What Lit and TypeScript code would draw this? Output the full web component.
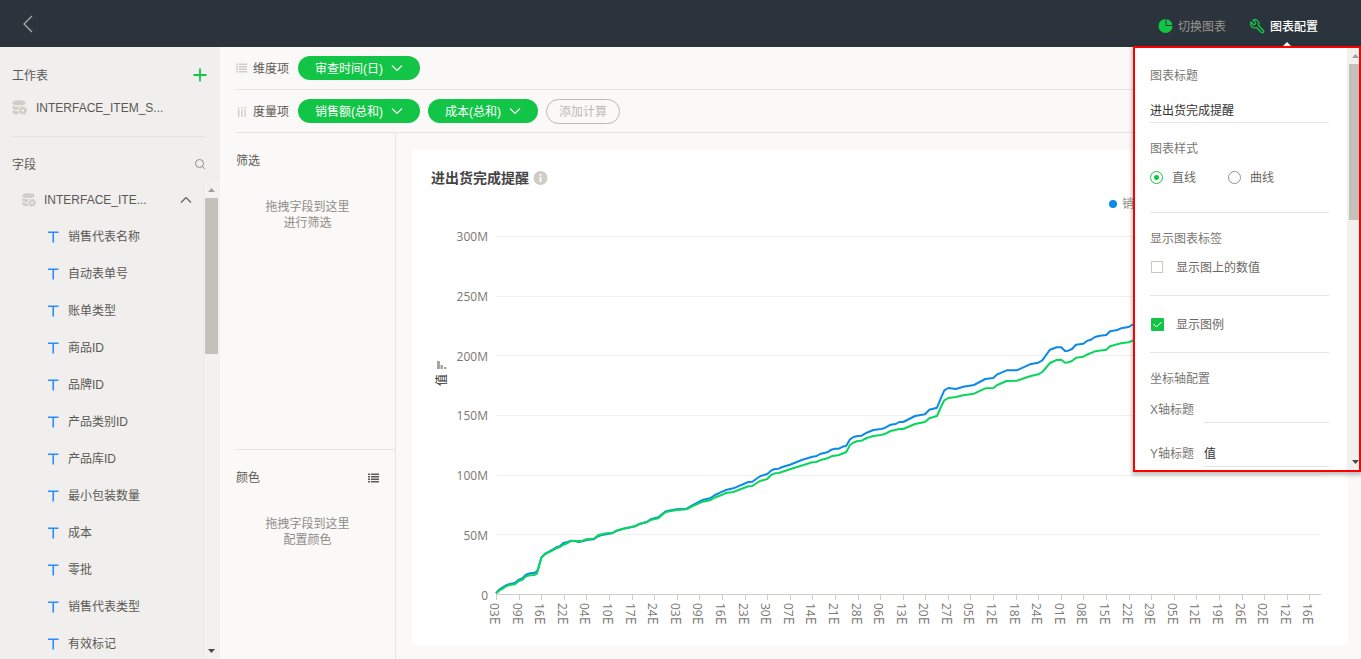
import { LitElement, html, css, svg } from "lit";
import { customElement, property } from "lit/decorators.js";

const FIELDS = ["销售代表名称", "自动表单号", "账单类型", "商品ID", "品牌ID", "产品类别ID", "产品库ID", "最小包装数量", "成本", "零批", "销售代表类型", "有效标记"];

const DAYS = ["03", "09", "16", "22", "04", "10", "17", "24", "03", "09", "16", "23", "30", "07", "14", "21", "28", "06", "13", "20", "27", "05", "12", "18", "24", "01", "08", "15", "22", "29", "05", "12", "19", "26", "02", "12", "16"];

const Y_TICKS = ["300M", "250M", "200M", "150M", "100M", "50M", "0"];

const SALES =
  "496,593.3 500,589 507.3,584.7 511,583.7 515,583 518.3,580 522.3,578.3 526,574.7 530,573.3 534,573 537,571.3 538.3,568 541.3,557.7 544.7,554 549,551.7 552.7,549.7 556.3,547.3 560,546.3 563.3,543 567.7,542 571.3,540.7 575,541 578.7,542 582.7,541.3 586.3,540 594,539.3 598,536.3 601.7,535 609.3,533.7 613.3,532.7 616.7,530.7 623.3,528.7 635,526.3 639.3,524 646.7,522 650.7,519.3 658.3,517.3 665.7,511.3 676.7,509.3 686.7,508.7 691.7,505.7 702.7,500 710,498.3 715,495 722.3,491.7 726,490 733.3,488.3 748.3,482 752.3,481.7 760,476.3 767.3,474 771,470.7 774.7,469 778.7,468.7 782.3,467 790,464.7 801.7,460 812.3,456.7 816,456.3 820,454 827.3,452.3 831.3,449.7 835,448.7 839,448.7 842.7,446.7 846.3,445.7 850,439.3 853.7,437 857.7,436 861.7,435.7 866.7,432.7 873.3,430 880.7,429 884,428.3 890.7,424.7 895.7,424 899.3,422 903.3,422 915,416 925,414.3 929.3,409.7 933.3,408.7 937,407.7 940.7,398.7 944.3,390.3 948.3,388 956,389 963.3,386.7 974,385 985.3,379 993.3,378 997.3,374.3 1006.7,370.3 1016.7,370.3 1030,364.3 1038.3,362.7 1042.3,360.3 1050,349.7 1056.7,347.3 1061.3,347.3 1065,351 1068.3,350.7 1072,349 1076,344.7 1083.3,343.7 1087.3,340.7 1091,339.7 1095,337 1100,335.7 1106.3,335 1110,331.3 1117.3,330 1121,328.3 1128.7,327 1132,325 1140,323 1160,316 1200,301 1260,280 1321,258";

const COST =
  "496,593.3 500,590 503.7,588 507.3,585.7 511,584.7 515,584.3 518.3,581.3 522.3,579.7 526,576.3 530,575.3 534,575 537,573.5 538.5,568 541.3,557.7 545,554 552.7,550.3 556.3,548.3 560,547 563.3,544.7 567.7,543 571.3,541 582,541 586.3,539.3 594,538.7 598,535.3 605,533.5 613,532.7 616.7,530.7 623.3,528.7 635,526.3 639.3,524 646.7,522.3 650.7,520 658.3,518.3 665.7,512 676.7,510 686.7,509.3 691.7,506.7 702.7,501.7 710,500.3 715,497.5 722.3,494.7 726,493 733.3,492 748.3,486.3 752.3,486 760,481 767.3,479 771,475 774.7,473.3 778.7,473 790,469.3 812.3,462.3 816,462 820,460.3 827.3,458.3 831.3,456.3 839,455 846.3,452 850,445 853.7,442.5 857.7,441 861.7,440.7 866.7,438 873.3,436 880.7,435 884,434.3 890.7,431 899.3,429 903.3,429 915,424 925,422 929.3,418.3 937,416 940.7,407.5 944.3,400.3 948.3,398 956,397 963.3,395.3 974,393.7 985.3,388.3 993.3,388 997.3,385 1006.7,381 1016.7,380.7 1030,376.3 1038.3,374.3 1042.3,372 1050,363 1056.7,360 1061.3,359.7 1065,362.7 1068.3,362.3 1072,361 1076,357.7 1083.3,356.7 1087.3,354.5 1095,351.3 1106.3,349.7 1110,346.3 1121,343.3 1128.7,342.3 1132,341 1160,331 1200,318 1260,300 1321,281";

const base = css`
  * { box-sizing: border-box; }
  :host {
    font: 12px/20px "Liberation Sans", "Noto Sans CJK SC", sans-serif;
    color: #5b5955;
  }
  svg { display: block; flex: none; }
  button, input { font: inherit; color: inherit; }
  button { border: 0; padding: 0; background: none; cursor: pointer; }
  .text { height: 20px; padding-top: 1px; }
`;

const chevron = (up = false) => svg`<svg width="12" height="8" viewBox="0 0 12 8" fill="none" stroke="currentColor" stroke-width="1.1"><path d=${up ? "M1 6.5 6 1.5 11 6.5" : "M1 1.5 6 6.5 11 1.5"} /></svg>`;

const database = (size: number) => html`<svg width=${size} height=${size} viewBox="0 0 15 15" fill="#d0cdc6">
  <path d="M.5 2.4C.5 1 3.400.2 6.900.2s6.400.8 6.400 2.200v1c0 1.300-2.900 1.900-6.400 1.900S.5 4.700.5 3.400z" />
  <path d="M.5 5.400c1.300 1 3.700 1.400 6.400 1.200l1 .2C6.700 7.500 5.900 8.600 5.700 9.900 3 9.800.5 9.300.5 8z" />
  <path d="M.5 9.700c1.300 1 3.100 1.300 5.200 1.300.1 1.200.7 2.300 1.600 3.100C3.700 14.400.5 13.900.5 12.400z" />
  <circle cx="10.800" cy="10.500" r="2.300" fill="none" stroke="#d0cdc6" stroke-width="2" />
  <circle cx="10.800" cy="10.500" r="3.700" fill="none" stroke="#d0cdc6" stroke-width="1.200" stroke-dasharray="1.700 1.206" />
</svg>`;

const list = (color: string) => html`<svg width="11" height="10" viewBox="0 0 11 10" fill=${color}>
  <path d="M0 .6h2v1.400H0zM3 .6h8v1.400H3zM0 3.100h2v1.400H0zM3 3.100h8v1.400H3zM0 5.600h2v1.400H0zM3 5.600h8v1.400H3zM0 8.100h2v1.400H0zM3 8.100h8v1.400H3z" />
</svg>`;

@customElement("scroll-track")
class ScrollTrack extends LitElement {
  static styles = css`
    :host { display: flex; flex-direction: column; background: #f2f1f0; }
    .arrow { display: block; flex: none; margin: 6px 0 6px 3px; }
    .thumb { width: 100%; max-width: 13px; height: 156px; background: #c4c1ba; }
    .space { flex: 1; }
  `;
  render() {
    return html`<svg class="arrow" width="7" height="4" viewBox="0 0 7 4"><path d="M0 4 3.5 0 7 4z" fill="#a09e9a" /></svg>
      <div class="thumb"></div>
      <div class="space"></div>
      <svg class="arrow" width="7" height="4" viewBox="0 0 7 4"><path d="M0 0 3.5 4 7 0z" fill="#4a4947" /></svg>`;
  }
}

@customElement("top-bar")
class TopBar extends LitElement {
  static styles = [base, css`
    :host { display: flex; align-items: center; height: 47px; background: #2b343c; padding: 0 43px 0 22px; }
    .back { color: #a9a69f; margin-right: auto; }
    .tab { display: flex; align-items: center; gap: 5px; height: 47px; padding-top: 5px; color: #98958f; }
    .tab + .tab { margin-left: 24px; }
    .active { position: relative; color: #fff; font-weight: 500; }
    .active::after {
      content: ""; position: absolute; left: 50%; bottom: 0; margin-left: -2px;
      border: 5px solid transparent; border-top: 0; border-bottom-color: #fff;
    }
  `];
  render() {
    return html`
      <button class="back" aria-label="返回"><svg width="12" height="18" viewBox="0 0 12 18" fill="none" stroke="currentColor" stroke-width="1.4"><path d="M10 1 2 9l8 8" /></svg></button>
      <button class="tab">
        <svg width="15" height="15" viewBox="0 0 15 15"><circle cx="7.5" cy="7" r="7" fill="#13c546" /><path d="M8 0v6.500h7" fill="none" stroke="#2b343c" stroke-width="1" /></svg>
        <span class="text">切换图表</span>
      </button>
      <button class="tab active">
        <svg width="15" height="15" viewBox="1 1 22 22" fill="none" stroke="#13c546" stroke-width="2" stroke-linejoin="round"><path transform="matrix(-1 0 0 1 24 0)" d="M14.700 6.300a1 1 0 0 0 0 1.400l1.600 1.600a1 1 0 0 0 1.400 0l3.770-3.770a6 6 0 0 1-7.940 7.940l-6.910 6.910a2.120 2.120 0 0 1-3-3l6.910-6.910a6 6 0 0 1 7.940-7.940z" /></svg>
        <span class="text">图表配置</span>
      </button>`;
  }
}

@customElement("field-sidebar")
class FieldSidebar extends LitElement {
  static styles = [base, css`
    :host { display: flex; flex-direction: column; width: 220px; flex: none; background: #f0efed; min-height: 0; }
    .head { display: flex; align-items: center; justify-content: space-between; height: 20px; margin: 18px 13px 0 12px; }
    .sheet { display: flex; align-items: center; gap: 9px; height: 20px; margin: 12px 12px 0 12px; }
    .rule { height: 1px; margin: 19px 14px 0 12px; background: #e5e4e2; }
    .head.fields { margin: 17px 14px 0 12px; }
    .body { display: flex; flex: 1; min-height: 0; margin-top: 8px; }
    .tree { flex: 1; min-width: 0; overflow: hidden; margin: 0; padding: 0; list-style: none; }
    .node { display: flex; align-items: center; height: 37px; padding: 0 10px 0 48px; gap: 9px; }
    .root { height: 36px; padding: 0 11px 0 22px; gap: 8px; }
    .root .name { flex: 1; }
    scroll-track { width: 17px; flex: none; border-left: 1px solid #e9e8e6; padding: 0 1px; }
  `];
  render() {
    return html`
      <div class="head"><span class="text">工作表</span>
        <button aria-label="添加"><svg width="14" height="14" viewBox="0 0 14 14" stroke="#13c546" stroke-width="1.8"><path d="M7 .5v13M.5 7h13" /></svg></button>
      </div>
      <div class="sheet">${database(15)}<span class="text">INTERFACE_ITEM_S...</span></div>
      <div class="rule"></div>
      <div class="head fields"><span class="text">字段</span>
        <button aria-label="搜索"><svg width="12" height="12" viewBox="0 0 12 12" fill="none" stroke="#8f8c87" stroke-width="1"><circle cx="5.5" cy="5.5" r="4" /><path d="M8.300 8.300 11 11" /></svg></button>
      </div>
      <div class="body">
        <ul class="tree">
          <li class="node root">${database(14)}<span class="name">INTERFACE_ITE...</span>${chevron(true)}</li>
          ${FIELDS.map((f) => html`<li class="node">
            <svg width="11" height="12" viewBox="0 0 11 12" fill="none" stroke="#2a8cff" stroke-width="1.600"><path d="M0 1.300h10.500M5.250 1.300V11.500" /></svg><span>${f}</span>
          </li>`)}
        </ul>
        <scroll-track></scroll-track>
      </div>`;
  }
}

@customElement("pill-row")
class PillRow extends LitElement {
  @property() label = "";
  @property({ type: Boolean }) measure = false;
  @property({ attribute: false }) pills: string[] = [];
  static styles = [base, css`
    :host { display: flex; align-items: center; gap: 8px; height: 43px; border-bottom: 1px solid #e5e4e2; margin-left: 16px; }
    .label { display: flex; align-items: center; gap: 6px; width: 54px; }
    .pill { display: flex; align-items: center; gap: 8px; height: 24px; padding: 0 17px; border-radius: 12px; background: #13c546; color: #fff; }
    .add { display: flex; align-items: center; height: 25px; padding: 0 12px; border: 1px solid #bdbab5; border-radius: 13px; color: #bdbab5; }
  `];
  render() {
    return html`
      <span class="label">${this.measure
        ? html`<svg width="11" height="11" viewBox="0 0 11 11" fill="#d0cdc6"><path d="M2 1h1.400v1.500H2zM2 3.500h1.400V11H2zM5.200 1h1.400v1.500H5.200zM5.200 3.500h1.400V11H5.200zM8.400 1h1.400v1.500H8.400zM8.400 3.500h1.400V11H8.400z" /></svg>`
        : list("#d0cdc6")}<span class="text">${this.label}</span></span>
      ${this.pills.map((p) => html`<button class="pill"><span class="text">${p}</span>${chevron()}</button>`)}
      ${this.measure ? html`<button class="add"><span class="text">添加计算</span></button>` : ""}`;
  }
}

@customElement("drop-zones")
class DropZones extends LitElement {
  static styles = [base, css`
    :host { display: flex; flex-direction: column; width: 176px; flex: none; border-right: 1px solid #e5e4e2; }
    .zone { flex: 316 1 0; }
    .zone + .zone { flex: 210 1 0; }
    .zone + .zone::before { content: ""; display: block; height: 1px; margin-left: 16px; background: #e5e4e2; }
    .head { display: flex; align-items: center; justify-content: space-between; padding: 18px 16px 0; }
    .hint { margin: 28px 0 0; line-height: 16px; text-align: center; color: #8f8c87; }
  `];
  render() {
    return html`
      <section class="zone"><div class="head">筛选</div><p class="hint">拖拽字段到这里<br />进行筛选</p></section>
      <section class="zone"><div class="head">颜色${list("#5b5955")}</div><p class="hint">拖拽字段到这里<br />配置颜色</p></section>`;
  }
}

@customElement("line-chart")
class LineChart extends LitElement {
  static styles = [base, css`
    :host { display: flex; flex-direction: column; flex: 1; min-width: 0; margin: 16px 13px 14px 16px; padding: 19px 27px 0 19px; background: #fff; }
    .title { display: flex; align-items: center; gap: 4px; margin: 0; font-size: 14px; line-height: 20px; font-weight: bold; color: #444; }
    .legend { display: flex; justify-content: flex-end; gap: 32px; margin: 6px 30px 0 0; color: #8f8c87; }
    .key { display: flex; align-items: center; gap: 5px; }
    .dot { width: 8px; height: 8px; border-radius: 50%; background: #0b8ae8; }
    .dot.cost { background: #0ad65c; }
    .chart { flex: 1; min-height: 0; display: grid; grid-template: 1fr 50px / 20px 37px 1fr; margin-top: 22px; }
    .axis-title { display: flex; flex-direction: column; align-items: center; gap: 5px; justify-content: center; padding: 0 0 84px 2px; color: #333; }
    .sideways { writing-mode: vertical-rl; text-orientation: sideways; transform: rotate(180deg); line-height: 20px; }
    .y { display: flex; flex-direction: column; justify-content: space-between; margin: -9px 0 -11px; text-align: right; font-family: "Open Sans", sans-serif; color: #7a7772; }
    .plot { display: grid; margin-left: 8px; min-height: 0; }
    .lines, .series { grid-area: 1 / 1; }
    .lines { display: flex; flex-direction: column; justify-content: space-between; }
    .line { height: 1px; background: #f0f0f0; }
    .line:last-child { background: #d0cdc6; }
    .series { width: 100%; height: 100%; min-height: 0; overflow: visible; }
    .x { grid-column: 3; display: grid; grid-auto-flow: column; grid-auto-columns: calc(100% * 6 / 219); margin-left: 8px; }
    .tick { height: 5px; border-left: 1px solid #d0cdc6; }
    .day { width: 16px; margin: 3px 0 0 -9px; writing-mode: vertical-rl; text-orientation: sideways; white-space: nowrap; line-height: 16px; font-family: "Open Sans", sans-serif; color: #7a7772; }
    .unit { font-size: 14px; }
  `];
  render() {
    return html`
      <h2 class="title">进出货完成提醒
        <svg width="15" height="15" viewBox="0 0 15 15"><circle cx="7.5" cy="7" r="7" fill="#d0cdc6" /><path d="M6.600 3h1.800v1.700H6.600zM6.600 5.800h1.800V11H6.600z" fill="#fff" /></svg>
      </h2>
      <div class="legend">
        <span class="key"><span class="dot"></span>销售额(总和)</span>
        <span class="key"><span class="dot cost"></span>成本(总和)</span>
      </div>
      <div class="chart">
        <div class="axis-title">
          <svg width="10" height="8" viewBox="0 0 10 8" fill="#a8a59f"><path d="M0 0h3v8H0zM3.500 4h2.500v4H3.500zM7 6H9.500v2H7z" /></svg>
          <span class="sideways">值</span>
        </div>
        <div class="y">${Y_TICKS.map((t) => html`<span>${t}</span>`)}</div>
        <div class="plot">
          <div class="lines">${Y_TICKS.map(() => html`<div class="line"></div>`)}</div>
          <svg class="series" viewBox="496 236 825 359" preserveAspectRatio="none" fill="none" stroke-width="2" stroke-linejoin="round">
            <polyline points=${SALES} stroke="#0b8ae8" vector-effect="non-scaling-stroke" />
            <polyline points=${COST} stroke="#0ad65c" vector-effect="non-scaling-stroke" />
          </svg>
        </div>
        <div class="x">${DAYS.map((d) => html`<div><div class="tick"></div><div class="day">${d}<span class="unit">E</span></div></div>`)}</div>
      </div>`;
  }
}

@customElement("config-panel")
class ConfigPanel extends LitElement {
  static styles = [base, css`
    :host { display: flex; border: 2px solid #f00; background: #fff; box-shadow: 0 2px 4px 1px rgba(0, 0, 0, 0.25); color: #7a7772; }
    form { flex: 1; min-width: 0; padding: 0 18px 3px 15px; }
    .group { border-bottom: 1px solid #e5e4e2; }
    .caption { display: block; padding-top: 16px; }
    .first { padding-top: 18px; }
    input[type="text"] { display: block; width: 100%; min-width: 0; height: 23px; border: 0; border-bottom: 1px solid #e5e4e2; padding: 0 0 4px; background: none; outline: 0; border-radius: 0; color: #333; }
    .name { margin-top: 14px; }
    .choices { display: grid; grid-template-columns: 78px 1fr; margin-top: 8px; padding-bottom: 25px; }
    .choice { display: flex; align-items: center; gap: 9px; color: #6b6863; }
    .check { gap: 13px; padding: 18px 0; }
    .caption + .check { padding-top: 8px; }
    input[type="radio"], input[type="checkbox"] { appearance: none; width: 13px; height: 13px; margin: 0; border: 1px solid #96938d; background: #fff; }
    input[type="radio"] { border-radius: 50%; }
    input[type="radio"]:checked { border-color: #13c546; background: radial-gradient(circle, #13c546 2px, #fff 3px); }
    input[type="checkbox"] { border-color: #c9c6c0; width: 12px; height: 12px; margin-left: 1px; }
    input[type="checkbox"]:checked {
      width: 13px; height: 13px; margin-right: -1px; border: 0; border-radius: 1px;
      background: #13c546 url("data:image/svg+xml,%3Csvg xmlns='http://www.w3.org/2000/svg' viewBox='0 0 13 13' fill='none' stroke='white'%3E%3Cpath d='M2.500 6 5.500 9 10.500 4'/%3E%3C/svg%3E");
    }
    .field { display: flex; gap: 10px; margin-top: 10px; height: 24px; }
    .field + .field { margin-top: 20px; }
    .field label { flex: none; }
    .field input[type="text"] { height: 24px; padding-bottom: 4px; flex: 1; }
    scroll-track { width: 12px; flex: none; padding-left: 2px; box-sizing: border-box; }
  `];
  render() {
    return html`
      <form>
        <label class="caption first" for="title">图表标题</label>
        <input class="name" id="title" type="text" .value=${"进出货完成提醒"} />
        <div class="group">
          <span class="caption" id="style">图表样式</span>
          <div class="choices" role="radiogroup" aria-labelledby="style">
            <label class="choice"><input type="radio" name="style" checked /><span class="text">直线</span></label>
            <label class="choice"><input type="radio" name="style" /><span class="text">曲线</span></label>
          </div>
        </div>
        <div class="group">
          <span class="caption">显示图表标签</span>
          <label class="choice check"><input type="checkbox" /><span class="text">显示图上的数值</span></label>
        </div>
        <div class="group">
          <label class="choice check"><input type="checkbox" checked /><span class="text">显示图例</span></label>
        </div>
        <span class="caption">坐标轴配置</span>
        <div class="field"><label class="text" for="x">X轴标题</label><input id="x" type="text" /></div>
        <div class="field"><label class="text" for="y">Y轴标题</label><input id="y" type="text" .value=${"值"} /></div>
      </form>
      <scroll-track></scroll-track>`;
  }
}

@customElement("app-root")
class AppRoot extends LitElement {
  static styles = [base, css`
    :host { display: flex; flex-direction: column; height: 100vh; overflow: hidden; position: relative; background: #faf9f8; }
    top-bar { flex: none; }
    .work { display: flex; flex: 1; min-height: 0; }
    main { display: flex; flex-direction: column; flex: 1; min-width: 0; }
    pill-row { flex: none; }
    .canvas { display: flex; flex: 1; min-height: 0; }
    config-panel { position: absolute; top: 46px; right: 0; width: 228px; }
  `];
  render() {
    return html`
      <top-bar></top-bar>
      <div class="work">
        <field-sidebar></field-sidebar>
        <main>
          <pill-row label="维度项" .pills=${["审查时间(日)"]}></pill-row>
          <pill-row label="度量项" measure .pills=${["销售额(总和)", "成本(总和)"]}></pill-row>
          <div class="canvas">
            <drop-zones></drop-zones>
            <line-chart></line-chart>
          </div>
        </main>
      </div>
      <config-panel></config-panel>`;
  }
}
